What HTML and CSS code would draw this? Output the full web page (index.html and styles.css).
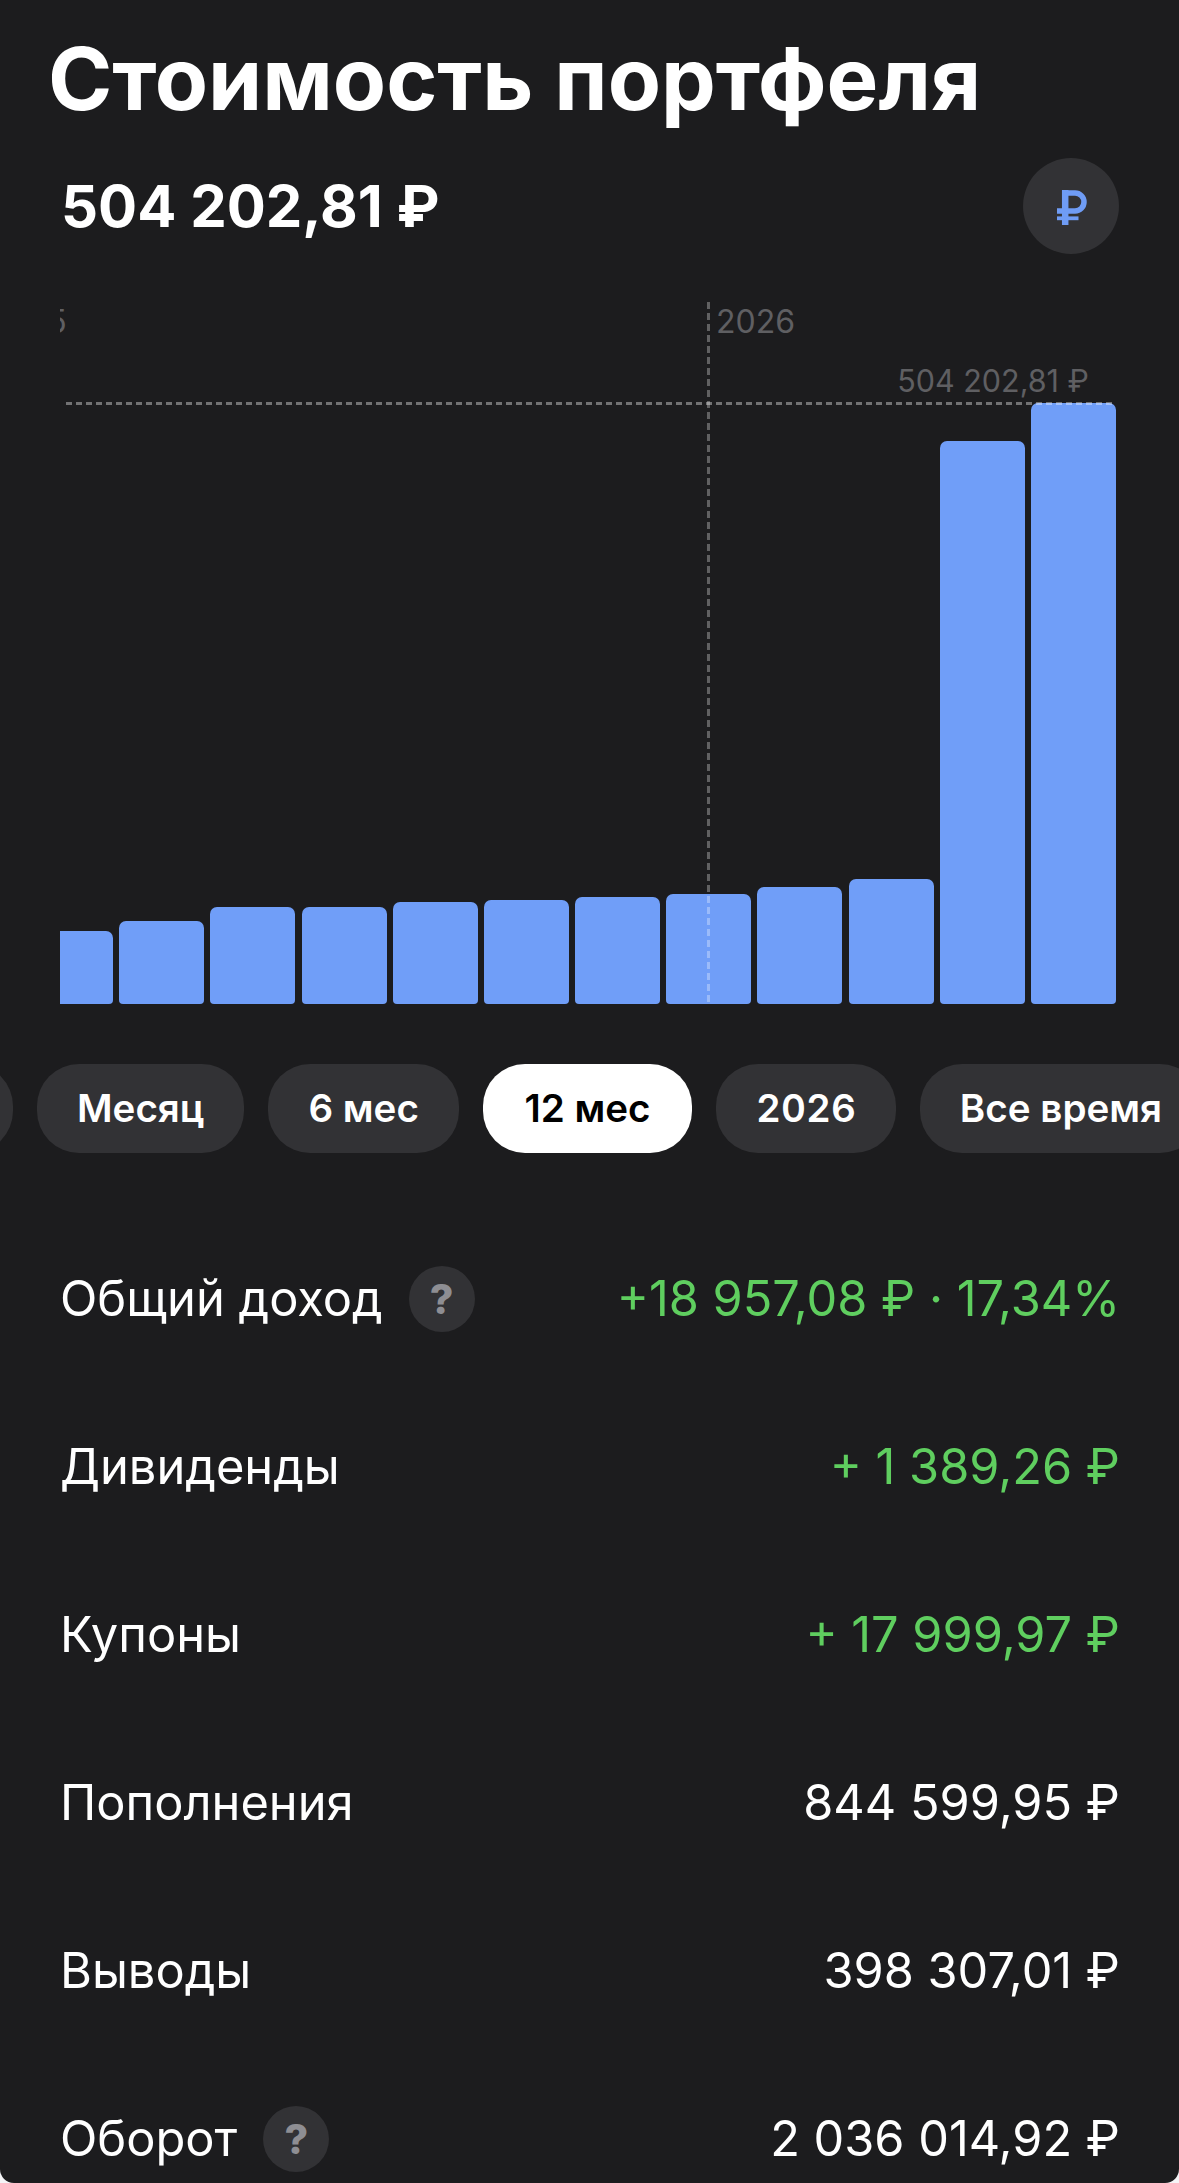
FILE: index.html
```html
<!DOCTYPE html>
<html lang="ru">
<head>
<meta charset="utf-8">
<title>Стоимость портфеля</title>
<link rel="stylesheet" href="styles.css">
</head>
<body>
<main class="screen">
  <h1 class="title">Стоимость портфеля</h1>
  <div class="summary">
    <div class="amount">504 202,81 ₽</div>
    <div class="currency">
      <svg class="currency-icon" viewBox="0 0 30 35" width="30" height="35"><path d="M8.200 0V35" stroke-width="6.500"/><path d="M8 3H18a9 9 0 0 1 0 18H0" stroke-width="5.500"/><path d="M0 28.300H21.500" stroke-width="3.800"/></svg>
    </div>
  </div>
  <section class="chart">
    <div class="bars">
      <div class="bar" style="height:73px"></div>
      <div class="bar" style="height:83px"></div>
      <div class="bar" style="height:97px"></div>
      <div class="bar" style="height:97px"></div>
      <div class="bar" style="height:102px"></div>
      <div class="bar" style="height:104px"></div>
      <div class="bar" style="height:107px"></div>
      <div class="bar" style="height:110px"></div>
      <div class="bar" style="height:117px"></div>
      <div class="bar" style="height:125px"></div>
      <div class="bar" style="height:563px"></div>
      <div class="bar" style="height:601px"></div>
    </div>
    <div class="year-line"></div>
    <div class="year-label">2026</div>
    <div class="year-prev">2025</div>
    <div class="max-line"></div>
    <div class="max-label">504 202,81 ₽</div>
  </section>
  <nav class="periods">
    <div class="pill pill-cut">Год</div>
    <div class="pill">Месяц</div>
    <div class="pill">6 мес</div>
    <div class="pill pill-on">12 мес</div>
    <div class="pill pill-num">2026</div>
    <div class="pill">Все время</div>
  </nav>
  <section class="rows">
    <div class="row"><div class="label">Общий доход <span class="help">?</span></div><div class="val green">+18 957,08 ₽ · 17,34%</div></div>
    <div class="row"><div class="label">Дивиденды</div><div class="val green">+ 1 389,26 ₽</div></div>
    <div class="row"><div class="label">Купоны</div><div class="val green">+ 17 999,97 ₽</div></div>
    <div class="row"><div class="label">Пополнения</div><div class="val">844 599,95 ₽</div></div>
    <div class="row"><div class="label">Выводы</div><div class="val">398 307,01 ₽</div></div>
    <div class="row"><div class="label">Оборот <span class="help">?</span></div><div class="val">2 036 014,92 ₽</div></div>
  </section>
</main>
</body>
</html>
```
FILE: styles.css
```css
* { box-sizing: border-box; }
html, body { margin: 0; padding: 0; background: #f4f4f6; }
.screen {
  width: 1179px;
  height: 2183px;
  overflow: hidden;
  background: #1c1c1e;
  border-radius: 0 0 14px 14px;
  color: #fff;
  font-family: Inter, "Noto Sans", sans-serif;
}
.title {
  margin: 0;
  padding: 29px 0 0 48px;
  font-size: 87px;
  line-height: 100px;
  font-weight: 700;
  white-space: nowrap;
}
.summary {
  display: flex;
  align-items: center;
  justify-content: space-between;
  padding: 29px 60px 0 61px;
}
.amount { font-size: 58px; line-height: 70px; font-weight: 700; }
.currency {
  width: 96px;
  height: 96px;
  border-radius: 50%;
  background: #323235;
  display: flex;
  align-items: center;
  justify-content: center;
}
.currency-icon { fill: none; stroke: #6f9cf5; margin: 3px 0 0 1px; }
.chart {
  position: relative;
  height: 702px;
  margin: 48px 63px 0 60px;
  overflow: hidden;
}
.bars {
  position: absolute;
  inset: 0;
  display: flex;
  justify-content: flex-end;
  align-items: flex-end;
  gap: 6.200px;
}
.bar {
  flex: 0 0 85px;
  background: #709ef8;
  border-radius: 7px 7px 4px 4px;
}
.year-line {
  position: absolute;
  left: 647px;
  top: 0;
  bottom: 0;
  width: 3px;
  background: repeating-linear-gradient(180deg, rgba(255, 255, 255, .3) 0 7px, transparent 7px 11px);
}
.year-label, .year-prev {
  position: absolute;
  top: 1px;
  font-size: 32px;
  line-height: 38px;
  color: #5f5f62;
}
.year-label { left: 656px; }
.year-prev { left: -72px; }
.max-line {
  position: absolute;
  left: 6px;
  right: 0;
  top: 100px;
  height: 3px;
  background: repeating-linear-gradient(90deg, rgba(255, 255, 255, .38) 0 6px, transparent 6px 10px);
}
.max-label {
  position: absolute;
  right: 27px;
  top: 61px;
  font-size: 30.500px;
  line-height: 36px;
  color: #5f5f62;
}
.periods {
  display: flex;
  gap: 24px;
  margin: 60px 0 0 -100px;
  width: 1400px;
}
.pill {
  height: 89px;
  padding: 0 40px;
  border-radius: 42px;
  background: #323235;
  font-size: 38.600px;
  line-height: 89px;
  font-weight: 600;
  white-space: nowrap;
}
.pill-cut { width: 113px; padding: 0; color: transparent; }
.pill-on { background: #fff; color: #000; padding: 0 41.500px; }
.pill-num { font-variant-numeric: tabular-nums; }
.rows { padding: 62px 59px 0 60px; }
.row {
  display: flex;
  justify-content: space-between;
  align-items: center;
  height: 168px;
}
.label {
  display: flex;
  align-items: center;
  gap: 26px;
  font-size: 48.800px;
  line-height: 66px;
}
.help {
  width: 66px;
  height: 66px;
  border-radius: 50%;
  background: #323235;
  color: #8e8e93;
  font-size: 41px;
  font-weight: 800;
  text-align: center;
}
.val { font-size: 48.700px; line-height: 66px; white-space: nowrap; }
.green { color: #5fce5f; }
```
